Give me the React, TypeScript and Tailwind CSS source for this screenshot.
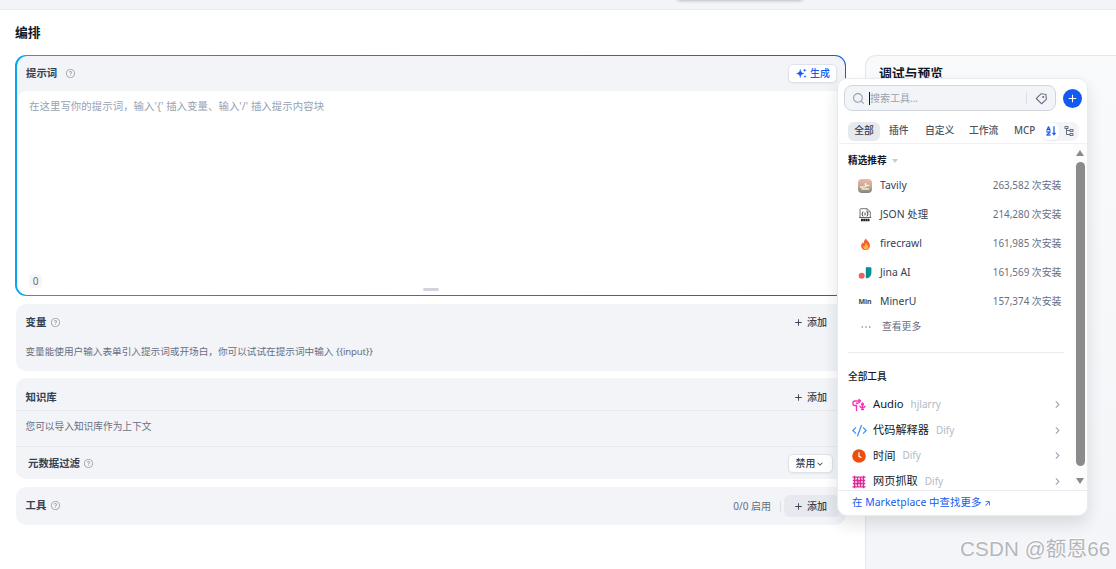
import type { ReactNode } from "react";
import {
    RiAddLine,
    RiArrowDownSLine,
    RiArrowRightSLine,
    RiArrowRightUpLine,
    RiCodeSSlashLine,
    RiMoreLine,
    RiNodeTree,
    RiPriceTag3Line,
    RiQuestionLine,
    RiSearchLine,
    RiSortAlphabetAsc,
} from "react-icons/ri";

function TavilyIcon() {
    return (
        <svg viewBox="0 0 14 14" className="size-3.5">
            <defs>
                <linearGradient id="tavily" x1="0" y1="0" x2="0" y2="1">
                    <stop offset="0" stopColor="#efb8a4" />
                    <stop offset="0.5" stopColor="#c9a78f" />
                    <stop offset="1" stopColor="#7f8a7c" />
                </linearGradient>
            </defs>
            <rect width="14" height="14" rx="4" fill="url(#tavily)" />
            <path d="M2 8h4.5M7.5 4v4.5M8 6.5h3.500M3.500 10h7.500" stroke="#fff" strokeWidth="1.6" fill="none" opacity="0.8" />
        </svg>
    );
}

function JsonIcon() {
    return (
        <svg viewBox="0 0 14 14" className="size-3.5" fill="none" stroke="#666">
            <path d="M2 9.5V1.5Q2 .7 2.8.7H9l3.3 3v5.8" strokeWidth="0.9" />
            <path d="M9 .8v3h3" strokeWidth="0.7" />
            <path d="M5.3 3.8q-1 0-.8 1.2 0 .9-.7 1 .7.1.7 1-.2 1.2.8 1.2M8.7 3.8q1 0 .8 1.2 0 .9.7 1-.7.1-.7 1 .2 1.2-.8 1.2M7 4.6v2.8" strokeWidth="0.9" stroke="#333" />
            <path d="M1 9.5h12.3" strokeWidth="1" />
            <path d="M3 12h8.5" stroke="#222" strokeWidth="2.4" strokeDasharray="1.9 .3" />
        </svg>
    );
}

function FireIcon() {
    return (
        <svg viewBox="0 0 14 14" className="size-3.5">
            <path d="M8 1.500c.5 2 3.600 3.100 3.900 6.700.2 2.600-1.600 4.800-4.200 4.800S3 11.400 3.200 8.700c.1-1.700 1-2.700 1.500-3.500.4.500.5 1 1 1.300C5.800 4 6.600 2.600 8 1.500z" fill="#f4602f" />
            <path d="M8.300 6.200c.2 1.300 2 1.800 2 4 0 1.400-1.100 2.400-2.500 2.400s-2.600-1-2.500-2.500c.1-.8.500-1.300.9-1.700.2.300.4.500.7.600 0-1.200.5-2.100 1.400-2.800z" fill="#ffb43c" />
        </svg>
    );
}

function JinaIcon() {
    return (
        <svg viewBox="0 0 14 14" className="size-3.5">
            <circle cx="3.7" cy="9.8" r="3" fill="#eb6161" />
            <path d="M7.8 1.2h4.600q1 0 1 1v4.200c0 3.500-2.500 5.800-5.600 5.900z" fill="#009191" />
        </svg>
    );
}

function AudioIcon() {
    return (
        <svg viewBox="0 0 14 14" className="size-3.5" fill="none" stroke="#fa32b9" strokeWidth="1.4" strokeLinecap="round">
            <path d="M4.500 12.500V7.500H2.500Q1 7.500 1 6V5Q1 3 3 3H8M7 1.500L8.500 3L7 4.500M4.500 5.200H6" />
            <path d="M10.500 5v6.500M8 8.200q.5 1.500 2.500 1.500t2.500-1.500M9.500 11.500h2" />
            <circle cx="10.500" cy="6.300" r="0.9" fill="#fa32b9" />
        </svg>
    );
}

function ClockIcon() {
    return (
        <svg viewBox="0 0 14 14" className="size-3.5">
            <circle cx="7" cy="7" r="6.8" fill="#ec4e0e" />
            <path d="M7 3.2v4.100l2.500 1.500" stroke="#fff" strokeWidth="1.2" fill="none" />
        </svg>
    );
}

function ScraperIcon() {
    return (
        <svg viewBox="0 0 14 14" className="size-3.5" fill="none" stroke="#dc2c95" strokeWidth="1.3">
            <path d="M.5 2.200h13M.5 11.800h13M2.500.8v12.400M11.500.8v12.400M.8 5.500h12.400M.8 8.500h12.400M5.600 2v10M8.500 2v10" />
            <path d="M3 3l8 8M11 3l-8 8" strokeWidth="0.5" />
        </svg>
    );
}

function GenerateIcon() {
    return (
        <svg viewBox="0 0 11 11" className="size-[11px]" fill="#155aef">
            <path d="M4.300 1.300c.5 2.700.9 3.500 3.700 4.200-2.800.7-3.200 1.500-3.700 4.200C3.800 7 3.300 6.200.5 5.500c2.800-.7 3.300-1.500 3.800-4.200z" stroke="#155aef" strokeWidth="0.4" />
            <path d="M8.700.5l.5 1.300 1.300.5-1.300.5-.5 1.300-.5-1.300-1.300-.5 1.300-.5zM9 7l.4 1.100 1.100.4-1.100.4L9 10l-.4-1.100-1.100-.4 1.100-.4z" />
        </svg>
    );
}

const featured = [
    { name: "Tavily", installs: "263,582", icon: <TavilyIcon /> },
    { name: "JSON 处理", installs: "214,280", icon: <JsonIcon /> },
    { name: "firecrawl", installs: "161,985", icon: <FireIcon /> },
    { name: "Jina AI", installs: "161,569", icon: <JinaIcon /> },
    {
        name: "MinerU",
        installs: "157,374",
        icon: <span className="text-[7px] font-bold text-[#444]">Min</span>,
    },
];

const tools = [
    { name: "Audio", author: "hjlarry", icon: <AudioIcon /> },
    { name: "代码解释器", author: "Dify", icon: <RiCodeSSlashLine className="size-[15px] shrink-0 stroke-[#3b92f5] text-[#3b92f5]" /> },
    { name: "时间", author: "Dify", icon: <ClockIcon /> },
    { name: "网页抓取", author: "Dify", icon: <ScraperIcon /> },
];

function Help({ className = "ml-1" }: { className?: string }) {
    return <RiQuestionLine className={`-mt-px size-[11px] shrink-0 text-[#a5abb8] ${className}`} />;
}

function AddButton({ active = false }: { active?: boolean }) {
    return (
        <button
            className={`flex h-[22px] w-[56px] items-center rounded-md pl-[9px] text-[10px] font-medium text-[#354052] ${active ? "bg-[#e7e9ef]" : ""}`}
        >
            <RiAddLine className="mr-[3px] size-[11px]" />
            添加
        </button>
    );
}

function PanelTitle({ children }: { children: ReactNode }) {
    return <h2 className="text-[10.4px] font-bold text-[#354052]">{children}</h2>;
}

function PromptEditor() {
    return (
        <section className="-ml-px h-[241px] rounded-[11px] bg-linear-to-r from-[#0ba5ec] to-[#155aef] py-px pr-px pl-[2px]">
            <div className="flex h-full flex-col overflow-hidden rounded-[10px] bg-[#f2f4f7]">
                <div className="flex h-[35px] shrink-0 items-center pr-2 pl-[9px]">
                    <PanelTitle>提示词</PanelTitle>
                    <Help className="ml-2" />
                    <button className="ml-auto flex h-[19px] w-[49px] items-center gap-[3px] rounded-[5px] border border-[#dfe2e8] bg-white pl-[7px] text-[9.9px] font-medium text-[#155aef] shadow-xs">
                        <GenerateIcon />
                        生成
                    </button>
                </div>
                <div className="flex grow flex-col rounded-[10px] bg-white px-3 pt-[7px]">
                    <p className="text-[10.4px] leading-4 tracking-[0.07px] whitespace-pre text-[#98a2b3]">
                        在这里写你的提示词，输入'{"{"}' 插入变量、输入'/' 插入提示内容块
                    </p>
                    <span className="mt-auto flex h-3.5 w-[13px] shrink-0 items-center justify-center rounded-sm bg-[#f5f6f8] text-[10px] text-[#676f83]">
                        0
                    </span>
                    <div className="mb-1 h-[3px] w-4 shrink-0 self-center rounded-full bg-[#d0d5dd]" />
                </div>
            </div>
        </section>
    );
}

function ConfigColumn() {
    return (
        <div className="w-[830px] shrink-0">
            <PromptEditor />

            <section className="mt-2 h-[67px] rounded-[10px] bg-[#f2f4f7] px-[9.5px] pt-[7.5px]">
                <div className="flex h-[22px] items-center">
                    <PanelTitle>变量</PanelTitle>
                    <Help />
                    <div className="-mr-[3.500px] ml-auto">
                        <AddButton />
                    </div>
                </div>
                <p className="mt-[9.500px] text-[9.65px] leading-[17px] text-[#676f83]">
                    变量能使用户输入表单引入提示词或开场白，你可以试试在提示词中输入{" "}
                    <span className="tracking-[-0.2px]">{"{{input}}"}</span>
                </p>
            </section>

            <section className="mt-[7px] h-[101px] rounded-[10px] bg-[#f2f4f7]">
                <div className="flex h-8 items-center px-[9.5px] pt-[7px]">
                    <PanelTitle>知识库</PanelTitle>
                    <div className="-mr-[3.500px] ml-auto">
                        <AddButton />
                    </div>
                </div>
                <p className="flex h-9 items-center border-t border-[#e7e9ee] px-[9.5px] pb-0.5 text-[9.7px] text-[#676f83]">
                    您可以导入知识库作为上下文
                </p>
                <div className="flex h-[33px] items-center border-t border-[#e7e9ee] pt-px pr-[13px] pl-3">
                    <PanelTitle>元数据过滤</PanelTitle>
                    <Help className="ml-[3px]" />
                    <button className="ml-auto flex h-[19px] w-[45px] items-center justify-center rounded-[5px] border border-[#dfe2e8] bg-white text-[9.9px] font-medium text-[#354052] shadow-xs">
                        禁用
                        <RiArrowDownSLine className="size-2.5" />
                    </button>
                </div>
            </section>

            <section className="mt-2 flex h-[38px] items-center rounded-[10px] bg-[#f2f4f7] pr-[6px] pl-[9.5px]">
                <PanelTitle>工具</PanelTitle>
                <Help />
                <span className="ml-auto text-[10px] text-[#676f83]">0/0 启用</span>
                <span className="mr-[3px] ml-[9px] h-[11px] w-px bg-[#dcdfe6]" />
                <AddButton active />
            </section>
        </div>
    );
}

function ToolPicker() {
    return (
        <div className="absolute top-[78px] left-[837px] flex h-[438px] w-[251px] flex-col overflow-hidden rounded-[10px] border border-[#e9ebf0] bg-white pl-px shadow-[0_8px_16px_rgba(16,24,40,0.12)]">
            <div className="mt-[6px] flex items-center gap-[7px] pl-[5px]">
                <div className="flex h-[26px] w-[212px] items-center rounded-lg border border-[#d0d5dd] bg-[#f2f4f7] pr-[7px] pl-[7px]">
                    <RiSearchLine className="size-[13px] text-[#98a2b3]" />
                    <span className="ml-[4px] h-[13px] w-px bg-[#101828]" />
                    <span className="text-[10px] text-[#98a2b3]">搜索工具...</span>
                    <span className="mr-[8px] ml-auto h-3 w-px bg-[#dcdfe6]" />
                    <RiPriceTag3Line className="size-[13px] text-[#676f83]" />
                </div>
                <button className="flex size-[19px] items-center justify-center rounded-full bg-[#155aef] text-white">
                    <RiAddLine className="size-[13px]" />
                </button>
            </div>

            <div className="mt-[5px] flex h-[28px] shrink-0 items-center border-b border-[#f0f1f4] pt-[3px] pl-[9px] text-[9.8px] font-medium text-[#495464]">
                <span className="flex h-[19px] w-8 items-center justify-center rounded-md bg-[#e7e9ef] text-[#354052]">全部</span>
                <span className="ml-[9px] w-9">插件</span>
                <span className="w-[44px]">自定义</span>
                <span className="w-[45px]">工作流</span>
                <span className="w-7">MCP</span>
                <div className="flex h-[19px] w-[37px] items-center rounded-lg bg-[#f2f4f7] p-px">
                    <span className="-ml-px flex h-[17px] w-[17px] items-center justify-center rounded-md bg-white shadow-xs">
                        <RiSortAlphabetAsc className="size-[12px] stroke-[#155aef] stroke-[0.5] text-[#155aef]" />
                    </span>
                    <RiNodeTree className="ml-1 size-[12px] text-[#676f83]" />
                </div>
            </div>

            <div className="flex h-[346px] shrink-0">
                <div className="w-[235px] overflow-hidden pl-[9px]">
                    <div className="flex h-[27px] items-center pt-[7px] text-[9.7px] font-semibold text-[#101828]">
                        精选推荐
                        <span className="ml-[5px] border-x-[3px] border-t-4 border-x-transparent border-t-[#c8ccd4]" />
                    </div>
                    {featured.map((t) => (
                        <div key={t.name} className="flex h-[29px] items-center pr-[12.500px] pl-[10px]">
                            <span className="flex w-3.5 shrink-0 justify-center pt-px">{t.icon}</span>
                            <span className="ml-[8px] text-[10.4px] text-[#354052]">{t.name}</span>
                            <span className="ml-auto text-[9.9px] text-[#676f83]">{t.installs} 次安装</span>
                        </div>
                    ))}
                    <div className="flex h-[22px] items-center pl-[12px] text-[9.8px] text-[#676f83]">
                        <RiMoreLine className="mr-[10px] size-3" />
                        查看更多
                    </div>
                    <div className="mt-[14px] w-[216px] border-t border-[#e9ebf0]" />
                    <div className="mt-[14px] flex h-[20px] items-center text-[9.7px] font-medium text-[#101828]">全部工具</div>
                    <div className="mt-[5px]">
                        {tools.map((t) => (
                            <div key={t.name} className="flex h-[25.6px] items-center pr-3 pl-1">
                                <span className="flex w-3.5 shrink-0 justify-center">{t.icon}</span>
                                <span className="ml-[7px] text-[11.2px] whitespace-nowrap text-[#101828]">
                                    {t.name}
                                </span>
                                <span className="ml-[7px] text-[10px] text-[#b4b9c4]">{t.author}</span>
                                <RiArrowRightSLine className="-mr-[2px] ml-auto size-[13px] text-[#98a2b3]" />
                            </div>
                        ))}
                    </div>
                </div>
                <div className="-ml-px flex grow flex-col items-center bg-[#fcfcfc] pt-1.5 pb-[6px]">
                    <span className="border-x-[4.5px] border-b-[6px] border-x-transparent border-b-[#8b8b8b]" />
                    <span className="mt-1.5 h-[304px] w-[9px] rounded-full bg-[#8b8b8b]" />
                    <span className="mt-auto border-x-[4.5px] border-t-[6px] border-x-transparent border-t-[#8b8b8b]" />
                </div>
            </div>

            <div className="-ml-px flex grow items-center border-t border-[#e9ebf0] pl-[14px] text-[10.4px] tracking-[0.06px] text-[#155aef]">
                在 Marketplace 中查找更多
                <RiArrowRightUpLine className="ml-[2px] size-[9px] stroke-[#155aef]" />
            </div>
        </div>
    );
}

export default function App() {
    return (
        <div className="relative flex h-[569px] w-[1116px] flex-col overflow-hidden bg-white font-['Noto_Sans','Noto_Sans_CJK_SC',sans-serif]">
            <div className="flex h-2.5 shrink-0 border-b border-[#e9ebf0] bg-[#f2f4f7] pl-[676px]">
                <div className="-mt-[9px] h-[9px] w-[128px] rounded-md shadow-[0_1px_3px_rgba(16,24,40,0.25)]" />
            </div>
            <h1 className="flex h-[45px] shrink-0 items-center pl-[15px] text-[12.8px] font-bold text-[#101828]">编排</h1>
            <div className="flex grow pl-4">
                <ConfigColumn />
                <aside className="ml-[19px] grow rounded-tl-[11px] border-t border-l border-[#e4e7ec] bg-linear-to-b from-[#f9fafb] to-[#f4f5f8] pt-[7px] pl-[13px]">
                    <h2 className="text-[12.8px] leading-5 font-bold text-[#101828]">调试与预览</h2>
                </aside>
            </div>
            <ToolPicker />
            <div className="absolute top-[535px] left-[960px] font-['Liberation_Sans','Noto_Sans_CJK_SC',sans-serif] text-[20.5px] leading-[28px] tracking-[0.2px] whitespace-nowrap text-[#b4b6ba] [text-shadow:-1px_-1px_0_#fff]">
                CSDN @额恩66
            </div>
        </div>
    );
}
